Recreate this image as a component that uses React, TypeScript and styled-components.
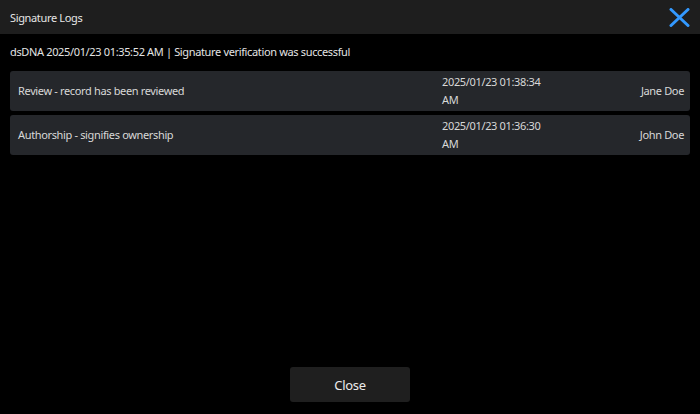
import React from 'react';
import styled, { createGlobalStyle } from 'styled-components';

const GlobalStyle = createGlobalStyle`
  html, body {
    margin: 0;
    padding: 0;
    background: #000;
  }
  body {
    font-family: "Noto Sans", "Open Sans", sans-serif;
    color: #e2e2e2;
  }
`;

const Page = styled.div`
  width: 700px;
  height: 414px;
  display: flex;
  flex-direction: column;
  background: #000;
  overflow: hidden;
`;

const Header = styled.div`
  height: 34px;
  flex: none;
  display: flex;
  align-items: center;
  justify-content: space-between;
  padding: 0 10px;
  background: #1e1e1e;
`;

const Title = styled.div`
  font-size: 11px;
  color: #e6e6e6;
  letter-spacing: -0.35px;
`;

const CloseIcon = styled.button`
  width: 22px;
  height: 22px;
  padding: 0;
  border: none;
  background: none;
  display: flex;
  align-items: center;
  justify-content: center;
  cursor: pointer;
`;

const Body = styled.div`
  flex: 1;
  display: flex;
  flex-direction: column;
  padding: 10px 10px 12px;
`;

const Info = styled.div`
  font-size: 11px;
  line-height: 16px;
  letter-spacing: -0.35px;
  margin-bottom: 11px;
  color: #e4e4e4;
`;

const List = styled.div`
  display: flex;
  flex-direction: column;
  gap: 4px;
`;

const Row = styled.div`
  display: grid;
  grid-template-columns: 424px 1fr auto;
  align-items: center;
  height: 40px;
  padding: 0 6px 0 8px;
  background: #25272b;
  border-radius: 3px;
  font-size: 11px;
  line-height: 18px;
  letter-spacing: -0.35px;
  color: #d8d8d8;
`;

const DateCell = styled.div`
  width: 104px;
`;

const Signer = styled.div`
  text-align: right;
`;

const Footer = styled.div`
  margin-top: auto;
  display: flex;
  justify-content: center;
`;

const Button = styled.button`
  width: 120px;
  height: 35px;
  border: none;
  border-radius: 3px;
  background: #1f1f1f;
  color: #ececec;
  font-family: inherit;
  font-size: 13px;
  letter-spacing: -0.3px;
  cursor: pointer;
`;

const logs = [
  { action: 'Review - record has been reviewed', date: '2025/01/23 01:38:34 AM', signer: 'Jane Doe' },
  { action: 'Authorship - signifies ownership', date: '2025/01/23 01:36:30 AM', signer: 'John Doe' },
];

const App = () => (
  <Page>
    <GlobalStyle />
    <Header>
      <Title>Signature Logs</Title>
      <CloseIcon aria-label='close'>
        <svg width='21' height='19' viewBox='0 0 21 19'>
          <path d='M2 1.5 L19 17.5 M19 1.5 L2 17.5' stroke='#3399ff' strokeWidth='3' strokeLinecap='round' />
        </svg>
      </CloseIcon>
    </Header>
    <Body>
      <Info>dsDNA 2025/01/23 01:35:52 AM | Signature verification was successful</Info>
      <List>
        {logs.map((log) => (
          <Row key={log.date}>
            <div>{log.action}</div>
            <DateCell>{log.date}</DateCell>
            <Signer>{log.signer}</Signer>
          </Row>
        ))}
      </List>
      <Footer>
        <Button>Close</Button>
      </Footer>
    </Body>
  </Page>
);

export default App;
